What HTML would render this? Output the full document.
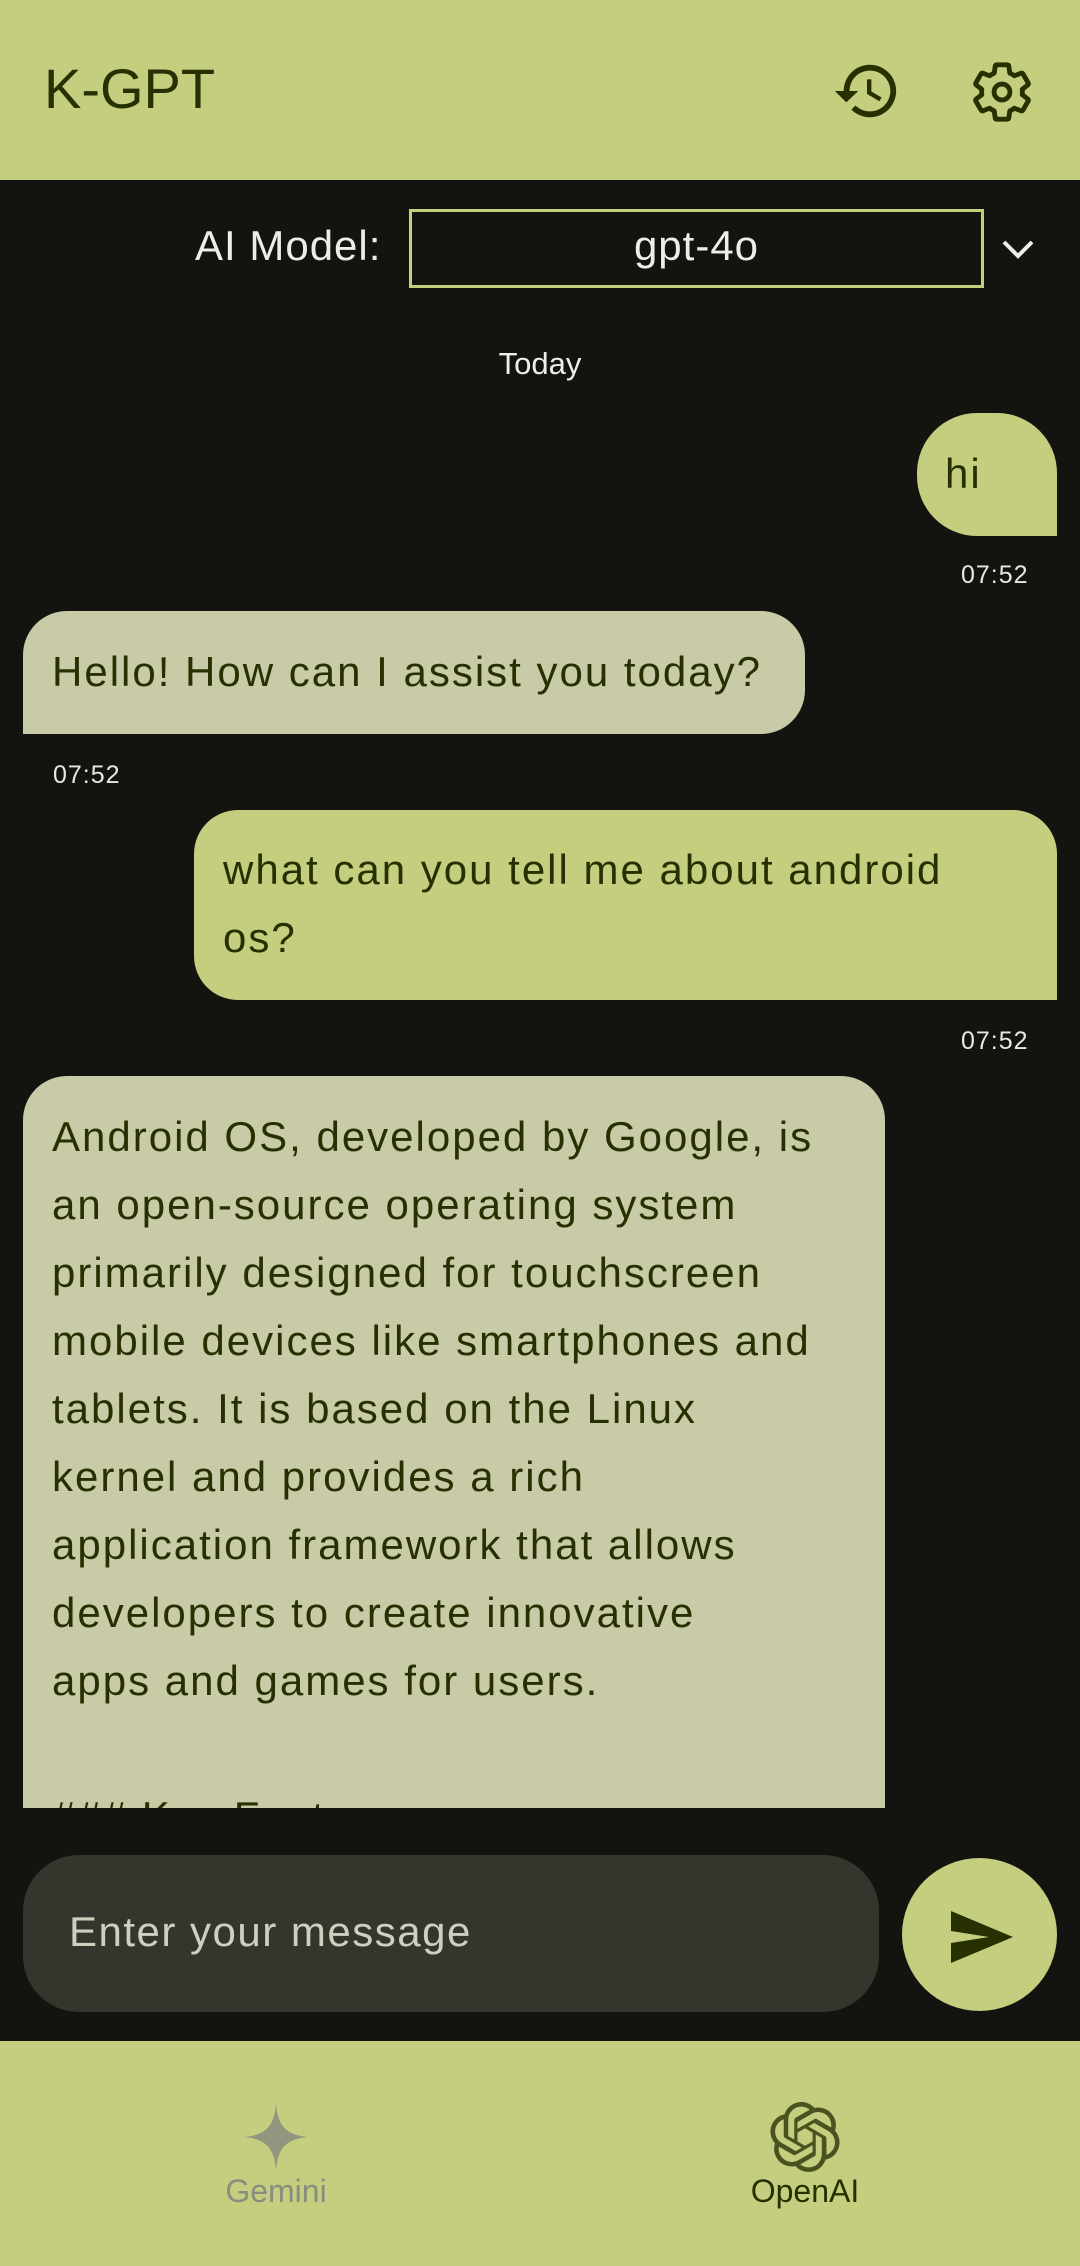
<!DOCTYPE html>
<html><head><meta charset="utf-8"><style>
*{margin:0;padding:0;box-sizing:border-box}
body{width:1080px;height:2266px;background:#13140f;font-family:"Liberation Sans",sans-serif;position:relative;overflow:hidden;color:#263000}
.abs{position:absolute}
.hdr{left:0;top:0;width:1080px;height:180px;background:#c4ce7e}
.t{white-space:nowrap}
.bub{position:absolute;font-size:42px;line-height:68px;color:#263000;letter-spacing:2px}
.ts{position:absolute;font-size:25px;color:#e8e8e0;letter-spacing:1px}
</style></head><body>
<div class="abs hdr"></div>
<div class="abs t" style="left:44px;top:56px;font-size:56px;color:#263000;">K-GPT</div>
<svg class="abs" style="left:832px;top:56px" width="70" height="70" viewBox="0 0 24 24"><path fill="#263000" d="M13 3a9 9 0 0 0-9 9H1l3.9 3.9L9 12H6a7 7 0 1 1 2.05 4.95l-1.42 1.42A9 9 0 1 0 13 3zm-1 5v5l4.25 2.52.77-1.28-3.52-2.09V8z"/></svg>
<svg class="abs" style="left:968px;top:58px" width="68" height="68" viewBox="0 0 24 24"><path fill="none" stroke="#263000" stroke-width="1.7" stroke-linejoin="round" d="M19.14 12.94c.04-.3.06-.61.06-.94s-.02-.64-.07-.94l2.03-1.58a.49.49 0 0 0 .12-.61l-1.92-3.32a.49.49 0 0 0-.59-.22l-2.39.96c-.5-.38-1.03-.7-1.62-.94l-.36-2.54a.48.48 0 0 0-.48-.41h-3.84a.48.48 0 0 0-.47.41l-.36 2.54c-.59.24-1.130.57-1.62.94l-2.39-.96a.48.48 0 0 0-.59.22L2.74 8.87a.47.47 0 0 0 .12.61l2.03 1.58c-.05.3-.09.63-.09.94s.02.64.07.94l-2.03 1.58a.49.49 0 0 0-.12.61l1.92 3.32c.12.22.37.29.59.22l2.39-.96c.5.38 1.03.7 1.62.94l.36 2.54c.05.24.24.41.48.41h3.84c.24 0 .44-.17.47-.41l.36-2.54c.59-.24 1.13-.56 1.62-.94l2.39.96c.22.08.47 0 .59-.22l1.92-3.320a.47.47 0 0 0-.12-.61z"/><circle cx="12" cy="12" r="2.8" fill="none" stroke="#263000" stroke-width="1.7"/></svg>

<div class="abs t" style="left:195px;top:222px;font-size:42px;color:#eeeee6;letter-spacing:1px">AI Model:</div>
<div class="abs" style="left:409px;top:209px;width:575px;height:79px;border:3px solid #c4ce7e;"></div>
<div class="abs t" style="left:409px;top:222px;width:575px;text-align:center;font-size:42px;color:#eeeee6;letter-spacing:1px">gpt-4o</div>
<svg class="abs" style="left:1000px;top:234px" width="36" height="30" viewBox="0 0 36 30"><path d="M4 8l14 14 14-14" stroke="#eeeee6" stroke-width="4" fill="none"/></svg>
<div class="abs t" style="left:440px;top:346px;width:200px;text-align:center;font-size:31px;color:#eeeee6;">Today</div>

<div class="bub" style="left:917px;top:413px;width:140px;height:123px;background:#c4ce7e;border-radius:60px 60px 0 60px;padding:27px 0 0 28px;">hi</div>
<div class="ts" style="left:961px;top:561px;">07:52</div>

<div class="bub t" style="left:23px;top:611px;width:782px;height:123px;background:#c8caa8;border-radius:44px 44px 44px 0;padding:27px 0 0 29px;">Hello! How can I assist you today?</div>
<div class="ts" style="left:53px;top:761px;">07:52</div>

<div class="bub t" style="left:194px;top:810px;width:863px;height:190px;background:#c4ce7e;border-radius:44px 44px 0 44px;padding:26px 0 0 29px;">what can you tell me about android<br>os?</div>
<div class="ts" style="left:961px;top:1027px;">07:52</div>

<div class="abs" style="left:23px;top:1076px;width:862px;height:732px;overflow:hidden;background:#c8caa8;border-radius:44px 44px 0 0;">
<div class="bub t" style="left:29px;top:27px;">Android OS, developed by Google, is<br>an open-source operating system<br>primarily designed for touchscreen<br>mobile devices like smartphones and<br>tablets. It is based on the Linux<br>kernel and provides a rich<br>application framework that allows<br>developers to create innovative<br>apps and games for users.<br><br>### Key Features</div>
</div>

<div class="abs" style="left:23px;top:1855px;width:856px;height:157px;background:#35352e;border-radius:56px;"></div>
<div class="abs t" style="left:69px;top:1908px;font-size:42px;color:#cfcfc0;letter-spacing:1.5px">Enter your message</div>
<div class="abs" style="left:902px;top:1858px;width:155px;height:153px;background:#c4ce7e;border-radius:50%;"></div>
<svg class="abs" style="left:951px;top:1909px" width="62" height="56" viewBox="0 0 62 56"><path d="M0 2L62 28 0 54 0 34 38 28 0 22z" fill="#263000"/></svg>

<div class="abs" style="left:0;top:2041px;width:1080px;height:225px;background:#c4ce7e;"></div>
<svg class="abs" style="left:244px;top:2104px" width="64" height="66" viewBox="0 0 64 66"><path d="M32 0C34 22 42 31 64 33 42 35 34 44 32 66 30 44 22 35 0 33 22 31 30 22 32 0z" fill="#929680"/></svg>
<div class="abs t" style="left:176px;top:2173px;width:200px;text-align:center;font-size:32px;color:#8a8c80;">Gemini</div>
<svg class="abs" style="left:770px;top:2102px" width="70" height="70" viewBox="0 0 24 24"><path fill="#4a5320" d="M22.28 9.82a5.980 5.98 0 0 0-.52-4.91 6.05 6.05 0 0 0-6.51-2.9A6.07 6.07 0 0 0 4.98 4.18a5.98 5.98 0 0 0-4 2.9 6.05 6.05 0 0 0 .74 7.1 5.98 5.98 0 0 0 .51 4.91 6.05 6.05 0 0 0 6.51 2.9A5.98 5.98 0 0 0 13.26 24a6.06 6.06 0 0 0 5.77-4.21 5.99 5.99 0 0 0 4-2.9 6.06 6.06 0 0 0-.75-7.07zm-9.02 12.61a4.48 4.48 0 0 1-2.88-1.04l.14-.08 4.78-2.76a.8.8 0 0 0 .39-.68v-6.74l2.02 1.17a.07.07 0 0 1 .04.05v5.58a4.5 4.5 0 0 1-4.49 4.5zm-9.66-4.13a4.47 4.47 0 0 1-.53-3.01l.14.09 4.78 2.76a.77.77 0 0 0 .78 0l5.84-3.37v2.33a.08.08 0 0 1-.03.06l-4.83 2.79a4.5 4.5 0 0 1-6.15-1.65zM2.34 7.9a4.49 4.49 0 0 1 2.37-1.97v5.68a.77.77 0 0 0 .39.68l5.81 3.35-2.02 1.17a.08.08 0 0 1-.07 0l-4.83-2.79A4.5 4.5 0 0 1 2.34 7.87zm16.6 3.86l-5.83-3.39 2.02-1.16a.08.08 0 0 1 .07 0l4.83 2.79a4.49 4.49 0 0 1-.68 8.1v-5.68a.79.79 0 0 0-.41-.66zm2.01-3.02l-.14-.09-4.77-2.78a.78.78 0 0 0-.79 0L9.41 9.23V6.9a.07.07 0 0 1 .03-.06l4.83-2.79a4.5 4.5 0 0 1 6.68 4.66zM8.31 12.86l-2.02-1.16a.08.08 0 0 1-.04-.06V6.07a4.5 4.5 0 0 1 7.38-3.45l-.14.08-4.78 2.76a.8.8 0 0 0-.39.68zm1.1-2.37l2.6-1.5 2.61 1.5v3l-2.6 1.5-2.61-1.5z"/></svg>
<div class="abs t" style="left:705px;top:2173px;width:200px;text-align:center;font-size:32px;color:#263000;">OpenAI</div>
</body></html>
